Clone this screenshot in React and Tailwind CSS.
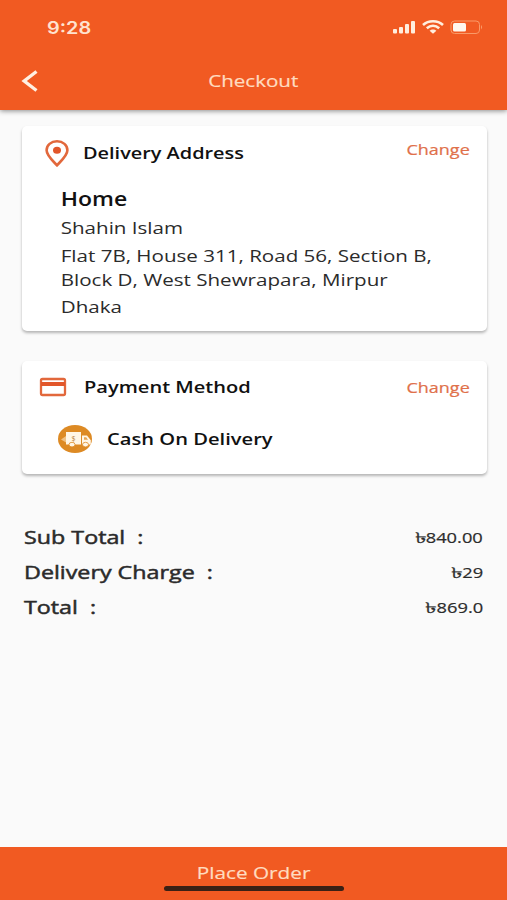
const TruckBadge = () => (
  <svg viewBox="0 0 34 28" className="h-7 w-[34px] shrink-0">
    <ellipse cx="17" cy="14" rx="17" ry="14" fill="#dd8a24" />
    <path d="M3 14.500 8 11v6.500z" fill="#f0c184" />
    <path d="M8 7H23v12.500H8z" fill="#fff6e6" />
    <path d="M24 10.500h5l3.800 4.700v4.300H24z" fill="#fff6e6" />
    <path d="M26 12.300h2.200l1.800 2.400h-4z" fill="#e3a455" />
    <text x="15.5" y="15.6" textAnchor="middle" className="font-['Open_Sans',sans-serif] text-[7px]" fill="#b98335">$</text>
    <ellipse cx="14" cy="19.600" rx="3" ry="2.300" fill="#fff6e6" stroke="#dd8a24" strokeWidth="0.800" />
    <ellipse cx="27.500" cy="19.600" rx="3" ry="2.300" fill="#fff6e6" stroke="#dd8a24" strokeWidth="0.800" />
  </svg>
);

const StatusIcons = () => (
  <svg viewBox="0 0 92 16" className="h-4 w-[92px]">
    <g fill="#ffeede">
      <rect x="1" y="10" width="4" height="4.500" rx="1" />
      <rect x="7" y="8" width="4" height="6.500" rx="1" />
      <rect x="13" y="5" width="4" height="9.500" rx="1" />
      <rect x="19" y="2" width="4" height="12.500" rx="1" />
    </g>
    <g fill="none" stroke="#ffeede" strokeWidth="2.600">
      <path d="M31 6C36.500 0.900 45.500 0.900 51 6" />
      <path d="M34.800 9.300C38.500 6.100 43.500 6.100 47.200 9.300" />
    </g>
    <path d="M37.600 11.800C39.500 10 42.500 10 44.400 11.800L41 14.800z" fill="#ffeede" />
    <rect x="59" y="2" width="28.500" height="12.500" rx="3.500" fill="none" stroke="#f99a68" />
    <rect x="61" y="4" width="13" height="8.500" rx="1.500" fill="#fff7ee" />
    <path d="M89 6q2.200 2.200 0 4.400z" fill="#f99a68" />
  </svg>
);

const ChangeLink = () => (
  <button className="origin-right scale-x-[1.2] text-[15px] leading-5 text-[#e0704a] [-webkit-text-stroke:0.2px]">Change</button>
);

const totals = [
  { label: 'Sub Total', value: '840.00' },
  { label: 'Delivery Charge', value: '29' },
  { label: 'Total', value: '869.0' },
];

export default function App() {
  return (
    <div className="flex h-[900px] w-[507px] flex-col overflow-hidden bg-[#fafafa] font-['Open_Sans','Noto_Sans',sans-serif] whitespace-nowrap text-[#2b2b2b]">
      <header className="z-10 h-[110px] shrink-0 bg-[#f15a22] shadow-[0_1px_5px_rgba(0,0,0,0.45)]">
        <div className="flex h-[54px] items-center justify-between pr-[23px] pl-[47px]">
          <span className="mt-[3px] origin-left scale-x-[1.17] font-[Inter,sans-serif] text-[17px] font-semibold text-[#ffe3cf]">9:28</span>
          <StatusIcons />
        </div>
        <div className="grid h-[54px] grid-cols-[1fr_auto_1fr] items-center">
          <svg viewBox="0 0 18 22" className="ml-[21px] h-[22px] w-[18px]" fill="none" stroke="#fff0e2" strokeWidth="3.400">
            <path d="M15.500 1.500 3.200 11l12.300 9.500" />
          </svg>
          <h1 className="scale-x-[1.21] text-[17px] text-[#ffdcc0] [-webkit-text-stroke:0.2px]">Checkout</h1>
        </div>
      </header>

      <main className="flex-1 pt-4 pr-[20px] pl-[22px]">
        {/* Delivery address */}
        <section className="h-[205px] rounded-[5px] bg-white pt-[13px] pr-[17px] pl-[23px] shadow-[0_2px_3px_rgba(0,0,0,0.28)]">
          <div className="flex h-7 items-center">
            <svg viewBox="0 0 24 28" className="h-7 w-6 shrink-0">
              <path d="M12 2.300C6 2.300 1.600 6.200 1.600 11.300 1.600 16.500 7 21 12 26.300 17 21 22.400 16.500 22.400 11.300 22.400 6.200 18 2.300 12 2.300z" fill="none" stroke="#e2683c" strokeWidth="2.600" />
              <ellipse cx="12" cy="11.300" rx="4" ry="3.500" fill="#e2562a" />
            </svg>
            <h2 className="ml-[14px] origin-left scale-x-[1.17] text-[17px] font-semibold text-[#111]">Delivery Address</h2>
            <div className="mb-[9px] ml-auto"><ChangeLink /></div>
          </div>
          <div className="origin-left scale-x-[1.21] pt-5 pl-[13px] text-[17px] leading-6">
            <p className="text-[19px] font-semibold text-[#111]">Home</p>
            <p className="mt-[5px]">Shahin Islam</p>
            <p className="mt-1">Flat 7B, House 311, Road 56, Section B,<br />Block D, West Shewrapara, Mirpur</p>
            <p className="mt-[3px]">Dhaka</p>
          </div>
        </section>

        {/* Payment method */}
        <section className="mt-[30px] h-[113px] rounded-[5px] bg-white pt-3 pr-[17px] pl-[17px] shadow-[0_2px_3px_rgba(0,0,0,0.28)]">
          <div className="flex h-7 items-center">
            <svg viewBox="0 0 28 20" className="h-5 w-7 shrink-0">
              <rect x="2" y="2" width="24" height="16" rx="1.500" fill="none" stroke="#e2683c" strokeWidth="2.300" />
              <path d="M2 5h24v4H2z" fill="#e2562a" />
            </svg>
            <h2 className="ml-[17px] origin-left scale-x-[1.18] text-[17px] font-semibold text-[#111]">Payment Method</h2>
            <div className="mb-px ml-auto"><ChangeLink /></div>
          </div>
          <div className="mt-6 flex h-7 items-center pl-[19px]">
            <TruckBadge />
            <span className="ml-[15px] origin-left scale-x-[1.185] text-[17px] font-semibold text-[#111]">Cash On Delivery</span>
          </div>
        </section>

        {/* Order totals */}
        <dl className="mt-[46px] pr-[4px] pl-[2px]">
          {totals.map(({ label, value }) => (
            <div key={label} className="flex h-[35px] items-center justify-between">
              <dt className="origin-left scale-x-[1.225] text-[19px] [-webkit-text-stroke:0.5px]">{label}&nbsp; :</dt>
              <dd className="origin-right scale-x-[1.22] pb-[2px] text-[15px] leading-5 [-webkit-text-stroke:0.2px]">
                <span className="inline-block origin-right scale-x-[1.3]">৳</span>{value}
              </dd>
            </div>
          ))}
        </dl>
      </main>

      <footer className="flex h-[53px] shrink-0 flex-col items-center bg-[#f15a22] pt-[14px]">
        <button className="scale-x-[1.22] text-[17px] leading-6 text-[#ffdcc0] [-webkit-text-stroke:0.2px]">Place Order</button>
        <div className="mt-px h-[5px] w-[180px] rounded-full bg-[#3a2015]" />
      </footer>
    </div>
  );
}
